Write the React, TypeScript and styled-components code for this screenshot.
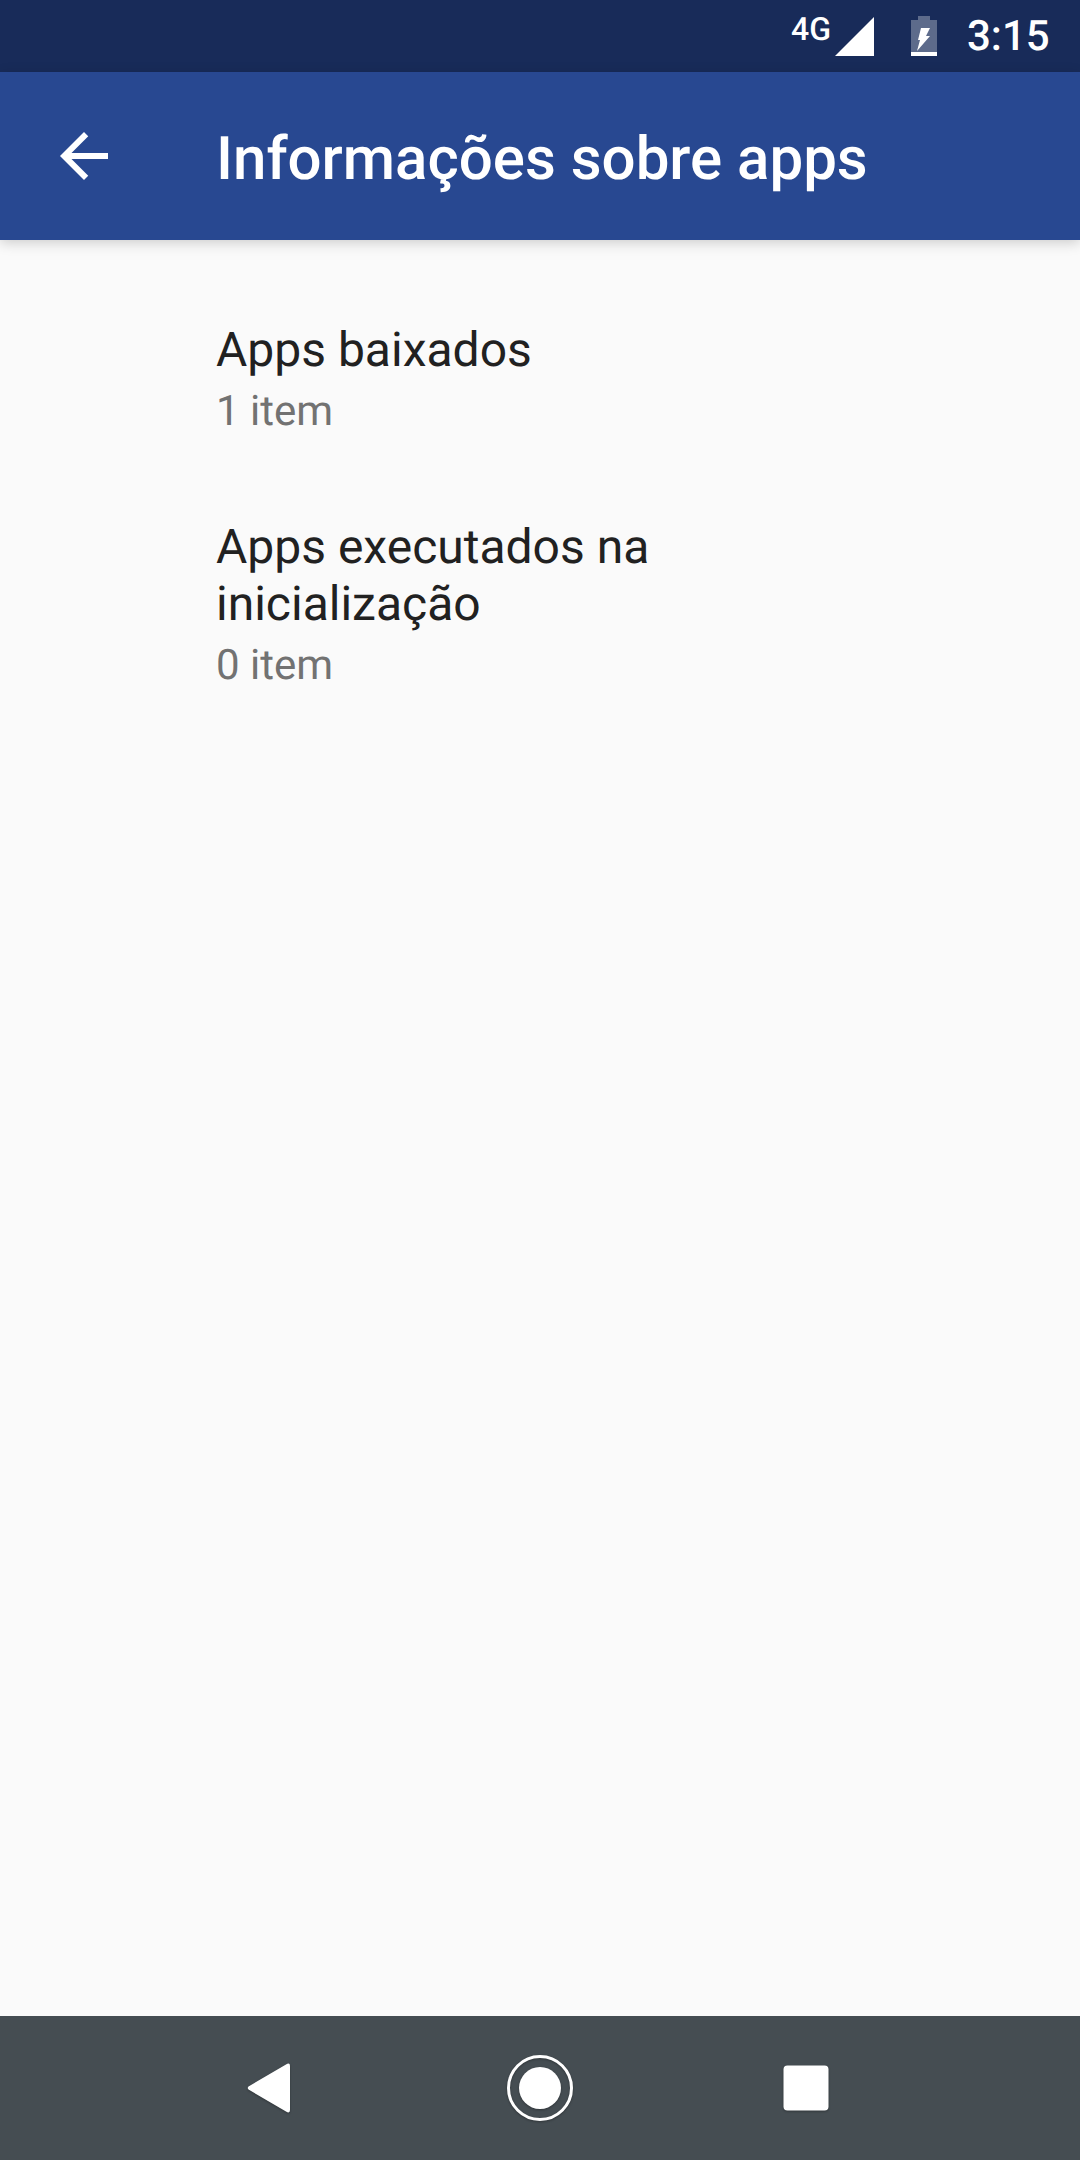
import React from 'react'
import styled, { createGlobalStyle } from 'styled-components'

const GlobalStyle = createGlobalStyle`
  html, body {
    margin: 0;
    padding: 0;
    background: #fafafa;
  }
  * {
    box-sizing: border-box;
  }
`

const Screen = styled.div`
  display: flex;
  flex-direction: column;
  width: 1080px;
  height: 2160px;
  overflow: hidden;
  background: #fafafa;
  font-family: Roboto, 'Liberation Sans', sans-serif;
  text-rendering: geometricPrecision;
`
const StatusBar = styled.div`
  display: flex;
  flex: none;
  align-items: center;
  justify-content: flex-end;
  height: 72px;
  padding-right: 32px;
  background: #182b59;
  color: #fff;
`
const NetworkLabel = styled.span`
  height: 36px;
  margin-top: -14px;
  font-size: 32px;
  font-weight: 500;
  line-height: 36px;
`
const SignalIcon = styled.svg`
  width: 39px;
  height: 39px;
  margin: 0 37px 0 4px;
`
const BatteryIcon = styled.svg`
  width: 26px;
  height: 40px;
  margin-right: 30px;
`
const Clock = styled.span`
  width: 81px;
  font-size: 42px;
  font-weight: 500;
  line-height: 49px;
  white-space: nowrap;
`
const Toolbar = styled.header`
  position: relative;
  z-index: 1;
  display: flex;
  flex: none;
  align-items: center;
  height: 168px;
  padding-left: 48px;
  background: #284891;
  box-shadow: 0 3px 12px rgba(0, 0, 0, 0.18);
  color: #fff;
`
const BackArrow = styled.svg`
  flex: none;
  width: 72px;
  height: 72px;
  margin-right: 96px;
  fill: #fff;
`
const Title = styled.h1`
  margin: 0;
  padding-top: 5px;
  font-size: 60px;
  font-weight: 500;
  line-height: 70px;
`
const List = styled.main`
  display: flex;
  flex: 1;
  flex-direction: column;
  padding-top: 40px;
`
const Row = styled.div`
  padding: 42px 216px 41px;
`
const RowTitle = styled.div`
  font-size: 48px;
  line-height: 56.25px;
  color: #212121;
`
const RowSubtitle = styled.div`
  margin-top: 9px;
  font-size: 42px;
  line-height: 49px;
  color: #727272;
`
const NavBar = styled.nav`
  display: flex;
  flex: none;
  align-items: center;
  justify-content: center;
  height: 144px;
  background: #454d52;
`
const NavSlot = styled.div`
  display: flex;
  align-items: center;
  justify-content: center;
  width: 266px;
`
const NavIcon = styled.svg`
  width: 72px;
  height: 72px;
  fill: #fff;
  filter: drop-shadow(0 1px 1px rgba(0, 0, 0, 0.3));
`

const items = [
  { title: 'Apps baixados', subtitle: '1 item' },
  { title: 'Apps executados na inicialização', subtitle: '0 item' },
]

export default function App() {
  return (
    <Screen>
      <GlobalStyle />
      <StatusBar>
        <NetworkLabel>4G</NetworkLabel>
        <SignalIcon viewBox="0 0 39 39">
          <path d="M39 0V39H0Z" fill="#fff" />
        </SignalIcon>
        <BatteryIcon viewBox="0 0 26 40">
          <path d="M7 0h12v4h7v32H0V4h7Z" fill="#fff" fillOpacity="0.3" />
          <path d="M0 36h26v4H0Z" fill="#fff" />
          <path d="M10 12h9l-4 8h4L6 35l3-11H7Z" fill="#fff" />
        </BatteryIcon>
        <Clock>3:15</Clock>
      </StatusBar>
      <Toolbar>
        <BackArrow viewBox="0 0 24 24">
          <path d="M20 11H7.83l5.59-5.59L12 4l-8 8 8 8 1.41-1.41L7.83 13H20v-2z" />
        </BackArrow>
        <Title>Informações sobre apps</Title>
      </Toolbar>
      <List>
        {items.map((item) => (
          <Row key={item.title}>
            <RowTitle>{item.title}</RowTitle>
            <RowSubtitle>{item.subtitle}</RowSubtitle>
          </Row>
        ))}
      </List>
      <NavBar>
        <NavSlot>
          <NavIcon viewBox="0 0 72 72">
            <path d="M48 12.5Q52 10 52 14V58Q52 62 48 59.5L10.5 37.5Q9 36 10.5 34.5Z" />
          </NavIcon>
        </NavSlot>
        <NavSlot>
          <NavIcon viewBox="0 0 72 72">
            <circle cx="36" cy="36" r="21" />
            <circle cx="36" cy="36" r="31.5" fill="none" stroke="#fff" strokeWidth="3" />
          </NavIcon>
        </NavSlot>
        <NavSlot>
          <NavIcon viewBox="0 0 72 72">
            <rect x="13.5" y="13.5" width="45" height="45" rx="4" />
          </NavIcon>
        </NavSlot>
      </NavBar>
    </Screen>
  )
}
